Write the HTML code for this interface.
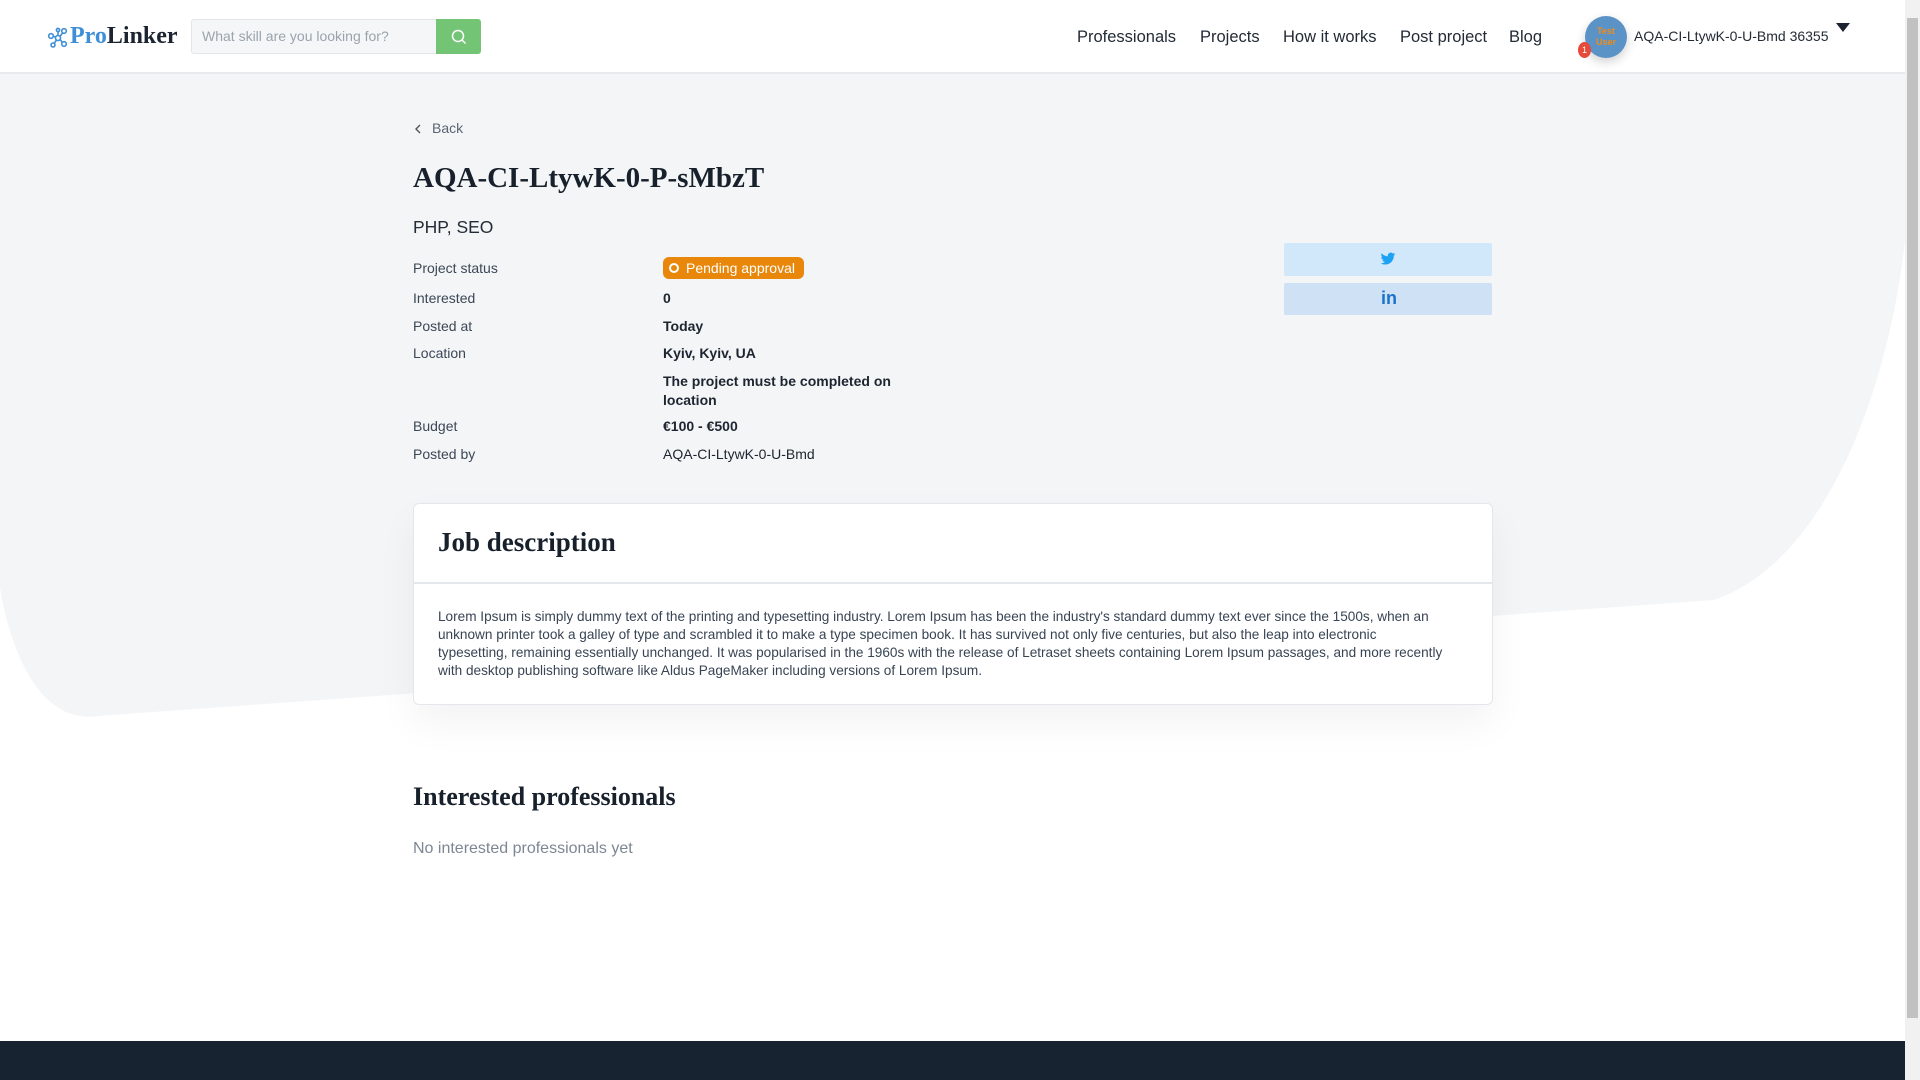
<!DOCTYPE html>
<html><head><meta charset="utf-8"><style>
*{margin:0;padding:0;box-sizing:border-box}
body{width:1920px;height:1080px;overflow:hidden;background:#fff;font-family:"Liberation Sans",sans-serif;color:#1d2733;position:relative}
.a{position:absolute;white-space:nowrap}
.slab{font-family:"Liberation Serif",serif;font-weight:bold;color:#17202b}
header{position:absolute;left:0;top:0;width:1905px;height:74px;background:#fff;border-bottom:2px solid #e8eaed;z-index:2}
.nav{font-size:16.5px;color:#222b36;top:28px}
.lbl{left:413px;font-size:14px;color:#3c4756}
.val{left:663px;font-size:14px;color:#1d2530;font-weight:bold}
</style></head><body>
<svg class="a" style="left:0;top:0" width="1920" height="1080">
<path d="M0 74 L1905 74 L1905 240 C1890 380 1830 560 1714 600 L98 716 C40 725 10 650 0 588 Z" fill="#f3f5f7"/>
<rect x="0" y="1041" width="1905" height="39" fill="#172330"/>
<rect x="1905" y="0" width="15" height="1080" fill="#f1f1f1"/>
<rect x="1907" y="18" width="11" height="1000" fill="#c1c1c1"/>
</svg>
<header>
<svg class="a" style="left:47px;top:27px" width="22" height="22" viewBox="0 0 22 22" fill="none" stroke="#3f8fd6" stroke-width="1.6"><circle cx="11" cy="11" r="2.5"/><circle cx="4" cy="9" r="2.3"/><circle cx="17" cy="4" r="2.3"/><circle cx="17" cy="17" r="2.3"/><circle cx="6" cy="18" r="2"/><circle cx="11" cy="3" r="1.6"/><path d="M9 10L6 9.5M13 9.5L15.5 6M13 12.5L15.5 15.5M9.5 13L7 16.5M11 8.5V4.6"/></svg>
<div class="a slab" style="left:70px;top:23px;font-size:24px"><span style="color:#3f8fd6">Pro</span><span style="color:#1b2430">Linker</span></div>
<div class="a" style="left:191px;top:19px;width:246px;height:35px;border:1px solid #e2e5e9;background:#f5f6f8;border-radius:3px 0 0 3px;font-size:14px;color:#9aa3ad;padding:8px 10px">What skill are you looking for?</div>
<div class="a" style="left:436px;top:19px;width:45px;height:35px;background:#74c476;border-radius:0 3px 3px 0"></div>
<svg class="a" style="left:449px;top:27px" width="20" height="20" viewBox="0 0 20 20" fill="none" stroke="#fff" stroke-width="1.5"><circle cx="9" cy="9" r="5.5"/><path d="M13 13l3.5 3.5"/></svg>
<div class="a nav" style="left:1077px">Professionals</div>
<div class="a nav" style="left:1200px">Projects</div>
<div class="a nav" style="left:1283px">How it works</div>
<div class="a nav" style="left:1400px">Post project</div>
<div class="a nav" style="left:1509px">Blog</div>
<div class="a" style="left:1585px;top:16px;width:42px;height:42px;border-radius:50%;background:#5b93c7;box-shadow:0 4px 10px rgba(0,0,0,.18);color:#f08c1a;font-size:9px;font-weight:bold;text-align:center;line-height:11px;padding-top:10px">Test<br>User</div>
<div class="a" style="left:1578px;top:42px;width:13px;height:16px;border-radius:50%;background:#e84a3a;color:#fff;font-size:9px;text-align:center;line-height:16px">1</div>
<div class="a" style="left:1634px;top:28px;font-size:14px;color:#222b36">AQA-CI-LtywK-0-U-Bmd 36355</div>
<svg class="a" style="left:1836px;top:23px" width="14" height="10"><path d="M0 0H14L7 9Z" fill="#1b2430"/></svg>
</header>
<svg class="a" style="left:414px;top:123px" width="10" height="12"><path d="M6 2L2 6L6 10" stroke="#555" stroke-width="1.4" fill="none"/></svg>
<div class="a" style="left:432px;top:120px;font-size:14px;color:#5a6573">Back</div>
<div class="a slab" style="left:413px;top:162px;font-size:29px">AQA-CI-LtywK-0-P-sMbzT</div>
<div class="a" style="left:413px;top:217px;font-size:17.5px;color:#222b36">PHP, SEO</div>
<div class="a lbl" style="top:260px">Project status</div>
<div class="a" style="left:663px;top:257px;width:141px;height:22px;border-radius:6px;background:#e8870a;color:#fff;font-size:14px;padding:3px 0 0 23px">Pending approval</div>
<div class="a" style="left:669px;top:263px;width:10px;height:10px;border:2px solid #fff;border-radius:50%"></div>
<div class="a lbl" style="top:290px">Interested</div><div class="a val" style="top:290px">0</div>
<div class="a lbl" style="top:318px">Posted at</div><div class="a val" style="top:318px">Today</div>
<div class="a lbl" style="top:345px">Location</div><div class="a val" style="top:345px">Kyiv, Kyiv, UA</div>
<div class="a val" style="top:372px;line-height:19px">The project must be completed on<br>location</div>
<div class="a lbl" style="top:418px">Budget</div><div class="a val" style="top:418px">€100 - €500</div>
<div class="a lbl" style="top:446px">Posted by</div><div class="a val" style="top:446px;font-weight:normal">AQA-CI-LtywK-0-U-Bmd</div>
<div class="a" style="left:1284px;top:243px;width:208px;height:33px;background:#d1e8fb;border-radius:2px"></div>
<svg class="a" style="left:1380px;top:251px" width="16" height="16" viewBox="0 0 24 24"><path fill="#1da1f2" d="M23 4.6a9 9 0 0 1-2.6.7 4.5 4.5 0 0 0 2-2.5 9 9 0 0 1-2.9 1.1A4.5 4.5 0 0 0 11.8 8 12.8 12.8 0 0 1 2.5 3.3a4.5 4.5 0 0 0 1.4 6 4.4 4.4 0 0 1-2-.6 4.5 4.5 0 0 0 3.6 4.5 4.5 4.5 0 0 1-2 .1 4.5 4.5 0 0 0 4.2 3.1A9 9 0 0 1 1 18.3 12.8 12.8 0 0 0 7.9 20.3c8.3 0 12.8-6.9 12.8-12.8v-.6A9 9 0 0 0 23 4.6z"/></svg>
<div class="a" style="left:1284px;top:283px;width:208px;height:32px;background:#cfe1f5;border-radius:2px"></div>
<div class="a" style="left:1381px;top:288px;font-size:18px;font-weight:bold;color:#1a73c9">in</div>
<div class="a" style="left:413px;top:503px;width:1080px;height:202px;background:#fff;border:1px solid #e3e7eb;border-radius:6px;box-shadow:0 18px 40px rgba(0,0,0,.05)"></div>
<div class="a" style="left:414px;top:582px;width:1078px;height:2px;background:#e4e8ec"></div>
<div class="a slab" style="left:438px;top:527px;font-size:27px">Job description</div>
<div class="a" style="left:438px;top:608px;font-size:13.6px;line-height:18px;color:#384454">Lorem Ipsum is simply dummy text of the printing and typesetting industry. Lorem Ipsum has been the industry's standard dummy text ever since the 1500s, when an<br>unknown printer took a galley of type and scrambled it to make a type specimen book. It has survived not only five centuries, but also the leap into electronic<br>typesetting, remaining essentially unchanged. It was popularised in the 1960s with the release of Letraset sheets containing Lorem Ipsum passages, and more recently<br>with desktop publishing software like Aldus PageMaker including versions of Lorem Ipsum.</div>
<div class="a slab" style="left:413px;top:782px;font-size:26px">Interested professionals</div>
<div class="a" style="left:413px;top:840px;font-size:16px;color:#7d8794">No interested professionals yet</div>
</body></html>
